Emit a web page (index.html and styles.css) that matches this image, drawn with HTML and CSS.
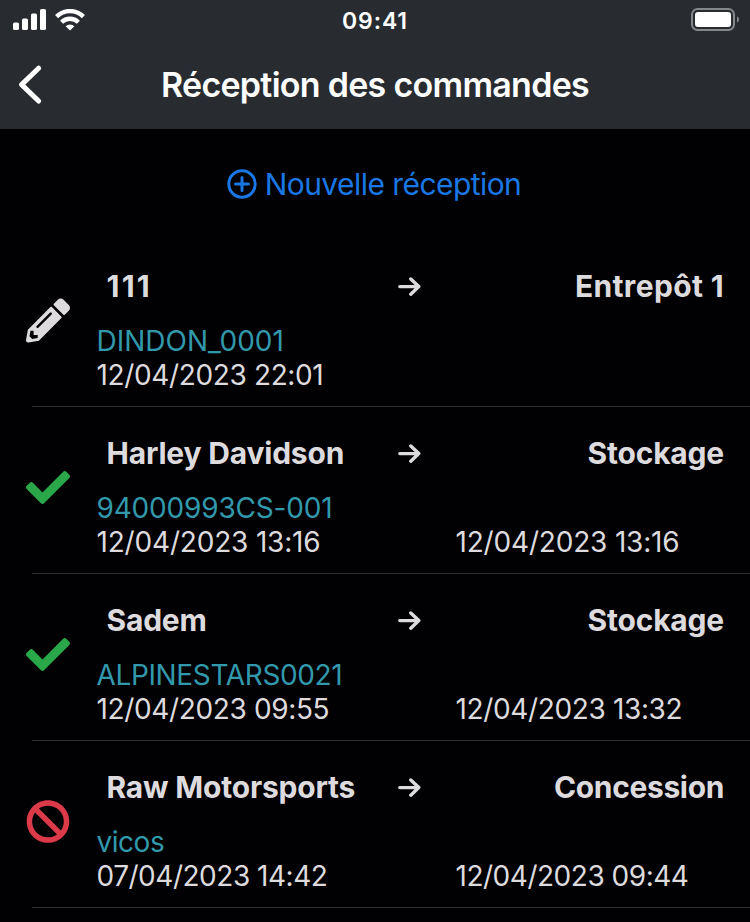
FILE: index.html
```html
<!DOCTYPE html>
<html lang="fr">
<head>
<meta charset="utf-8">
<title>Réception des commandes</title>
<link rel="stylesheet" href="styles.css">
</head>
<body>
<svg class="defs" width="0" height="0" aria-hidden="true">
  <symbol id="pencil" viewBox="0 -6 512 512"><path d="M497.9 142.1l-46.1 46.1c-4.7 4.7-12.3 4.7-17 0l-111-111c-4.7-4.7-4.7-12.3 0-17l46.1-46.1c18.7-18.7 49.1-18.7 67.9 0l60.1 60.1c18.8 18.7 18.8 49.1 0 67.9zM284.2 99.8L21.6 362.4.4 483.9c-2.9 16.4 11.4 30.6 27.8 27.8l121.5-21.3 262.6-262.6c4.7-4.7 4.7-12.3 0-17l-111-111c-4.8-4.7-12.4-4.7-17.1 0zM124.1 339.9c-5.5-5.5-5.5-14.3 0-19.8l154-154c5.5-5.5 14.3-5.5 19.8 0s5.5 14.3 0 19.8l-154 154c-5.5 5.5-14.3 5.5-19.8 0zM88 424h48v36.3l-64.5 11.3-31.1-31.1L51.7 376H88v48z"/></symbol>
  <symbol id="check" viewBox="0 -6 512 512"><path d="M173.898 439.404l-166.4-166.4c-9.997-9.997-9.997-26.206 0-36.204l36.203-36.204c9.997-9.998 26.207-9.998 36.204 0L192 312.69 432.095 72.596c9.997-9.997 26.207-9.997 36.204 0l36.203 36.204c9.997 9.997 9.997 26.206 0 36.204l-294.4 294.401c-9.998 9.997-26.207 9.997-36.204-.001z"/></symbol>
  <symbol id="ban" viewBox="0 -6 512 512"><path d="M256 8C119.034 8 8 119.033 8 256s111.034 248 248 248 248-111.034 248-248S392.967 8 256 8zm130.108 117.892c65.448 65.448 70 165.481 20.677 235.637L150.47 105.216c70.204-49.356 170.226-44.735 235.638 20.676zM125.892 386.108c-65.448-65.448-70-165.481-20.677-235.637L361.53 406.784c-70.203 49.356-170.226 44.735-235.638-20.676z"/></symbol>
  <symbol id="arrow" viewBox="0 0 24 20"><path d="M1.8 10.6H20.8M12.8 3L20.8 10.6L12.8 18.2" fill="none" stroke="currentColor" stroke-width="3.4" stroke-linecap="round" stroke-linejoin="round"/></symbol>
</svg>

<header class="header">
  <div class="status">
    <div class="status-left">
      <svg width="34" height="22" viewBox="0 0 34 22" fill="#fff"><rect x="0" y="13.5" width="6" height="7.5" rx="1.6"/><rect x="9" y="9.5" width="6" height="11.5" rx="1.6"/><rect x="18" y="4.5" width="6" height="16.5" rx="1.6"/><rect x="27" y="0" width="6" height="21" rx="1.6"/></svg>
      <svg class="wifi" width="30" height="22" viewBox="0 0 30 22" fill="none" stroke="#fff" stroke-width="4.4"><path d="M1.6 7.6A19 19 0 0 1 28.4 7.6"/><path d="M6.6 13.2A12 12 0 0 1 23.4 13.2"/><path d="M10.6 17.2A6.4 6.4 0 0 1 19.4 17.2L15 21.6Z" fill="#fff" stroke="none"/></svg>
    </div>
    <div class="time">09:41</div>
    <div class="status-right">
      <svg width="49" height="24" viewBox="0 0 49 24"><rect x="1" y="1" width="42" height="21" rx="5.5" fill="none" stroke="#85878a" stroke-width="2"/><rect x="4" y="4" width="36" height="15" rx="3" fill="#fff"/><path d="M46 8.2Q48 9.3 48 11.5T46 14.8Z" fill="#85878a"/></svg>
    </div>
  </div>
  <div class="nav">
    <svg class="back" width="24" height="40" viewBox="0 0 24 40" fill="none" stroke="#fff" stroke-width="5" stroke-linecap="round" stroke-linejoin="round"><path d="M20.6 3.2L3.6 19.6L20.6 36"/></svg>
    <h1 class="title">Réception des commandes</h1>
  </div>
</header>

<main>
  <a class="new">
    <svg width="30" height="30" viewBox="0 0 30 30" fill="none" stroke="currentColor" stroke-width="3"><circle cx="15" cy="15" r="13.2"/><path d="M15 8.6V21.4M8.6 15H21.4" stroke-linecap="round"/></svg>
    <span>Nouvelle réception</span>
  </a>

  <section class="list">
    <article class="row">
      <svg class="icon light"><use href="#pencil"/></svg>
      <div class="body">
        <div class="route"><span class="wide">111</span><svg class="arrow"><use href="#arrow"/></svg><span class="to loose">Entrepôt 1</span></div>
        <div class="ref">DINDON_0001</div>
        <div class="dates"><span>12/04/2023 22:01</span></div>
      </div>
    </article>
    <article class="row">
      <svg class="icon green"><use href="#check"/></svg>
      <div class="body">
        <div class="route"><span>Harley Davidson</span><svg class="arrow"><use href="#arrow"/></svg><span class="to">Stockage</span></div>
        <div class="ref snug">94000993CS-001</div>
        <div class="dates"><span class="snug">12/04/2023 13:16</span><span class="snug">12/04/2023 13:16</span></div>
      </div>
    </article>
    <article class="row">
      <svg class="icon green"><use href="#check"/></svg>
      <div class="body">
        <div class="route"><span>Sadem</span><svg class="arrow"><use href="#arrow"/></svg><span class="to">Stockage</span></div>
        <div class="ref tight">ALPINESTARS0021</div>
        <div class="dates"><span>12/04/2023 09:55</span><span>12/04/2023 13:32</span></div>
      </div>
    </article>
    <article class="row">
      <svg class="icon red"><use href="#ban"/></svg>
      <div class="body">
        <div class="route"><span>Raw Motorsports</span><svg class="arrow"><use href="#arrow"/></svg><span class="to tight">Concession</span></div>
        <div class="ref tighter">vicos</div>
        <div class="dates"><span class="tighter">07/04/2023 14:42</span><span class="tighter">12/04/2023 09:44</span></div>
      </div>
    </article>
  </section>
</main>
</body>
</html>
```

FILE: styles.css
```css
* { box-sizing: border-box; }
body {
  margin: 0;
  height: 922px;
  overflow: hidden;
  background: #010002;
  color: #dddbde;
  font-family: Inter, "Liberation Sans", sans-serif;
}
.defs { display: none; }
svg { display: block; flex: none; }
symbol { overflow: visible; }

.header { height: 129px; background: #282c31; color: #fff; }
.status {
  height: 40px;
  padding: 0 10px 0 13px;
  display: grid;
  grid-template-columns: 1fr auto 1fr;
  align-items: center;
}
.status-left { display: flex; gap: 8px; }
.status-right { display: flex; justify-content: flex-end; }
.time { padding: 1px 3px 0 0; font-size: 23px; font-weight: 600; letter-spacing: 0.9px; }
.nav {
  height: 89px;
  padding: 1px 18px 0;
  display: grid;
  grid-template-columns: 24px 1fr 24px;
  align-items: center;
}
.title {
  margin: 0;
  text-align: center;
  font-size: 34px;
  line-height: 40px;
  font-weight: 600;
  letter-spacing: -0.72px;
  white-space: nowrap;
}

.new {
  height: 111px;
  padding: 0 2px 1px 0;
  display: flex;
  justify-content: center;
  align-items: center;
  gap: 8px;
  color: #1a78e6;
  font-size: 30px;
  letter-spacing: -0.56px;
}

.row {
  display: flex;
  height: 167px;
  padding-left: 26px;
  background: linear-gradient(#2d2c2f, #2d2c2f) 32px 100% / 100% 1px no-repeat;
}
.icon { width: 44px; height: 44px; margin-top: 58px; fill: currentColor; overflow: visible; }
.light { color: #dddbde; }
.green { color: #2aa748; }
.red { color: #dc3a49; }
.body { flex: 1; padding-left: 26.5px; }
.route {
  height: 84px;
  padding: 8px 26px 0 10px;
  display: grid;
  grid-template-columns: 291px 24px 1fr;
  align-items: center;
  font-size: 30px;
  font-weight: 700;
  letter-spacing: -0.2px;
  white-space: nowrap;
}
.route .wide { letter-spacing: 2.2px; }
.route .loose { letter-spacing: 0.35px; }
.arrow { width: 24px; height: 20px; }
.to { text-align: right; }
.ref { height: 34px; line-height: 34px; font-size: 28px; color: #3299ad; }
.dates {
  display: grid;
  grid-template-columns: 359px 1fr;
  font-size: 28px;
  line-height: 34px;
  letter-spacing: -0.36px;
  white-space: nowrap;
}
.snug { letter-spacing: -0.18px; }
.tight { letter-spacing: -0.36px; }
.tighter { letter-spacing: -0.48px; }
```
